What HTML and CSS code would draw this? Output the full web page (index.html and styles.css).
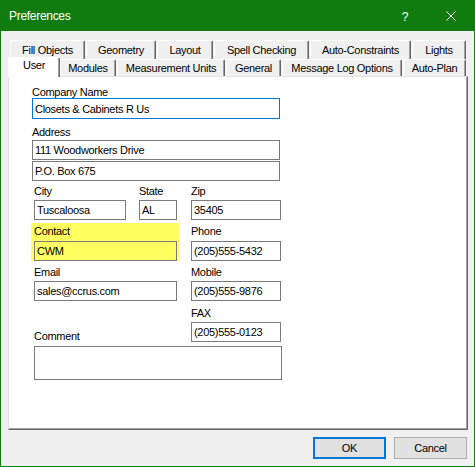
FILE: index.html
```html
<!DOCTYPE html>
<html>
<head>
<meta charset="utf-8">
<title>Preferences</title>
<link rel="stylesheet" href="styles.css">
</head>
<body>
<div class="window">
  <div class="titlebar">
    <span class="title">Preferences</span>
    <div class="controls">
      <span class="ctl help">?</span>
      <span class="ctl close"><svg width="10" height="10" viewBox="0 0 10 10"><path d="M0.5 0.5 L9.5 9.5 M9.5 0.5 L0.5 9.5" stroke="#fff" stroke-width="1" fill="none"/></svg></span>
    </div>
  </div>
  <div class="body">
    <div class="tabs">
      <div class="tabrow row1">
        <div class="tab">Fill Objects</div>
        <div class="tab">Geometry</div>
        <div class="tab">Layout</div>
        <div class="tab">Spell Checking</div>
        <div class="tab">Auto-Constraints</div>
        <div class="tab">Lights</div>
      </div>
      <div class="tabrow row2">
        <div class="tab selected">User</div>
        <div class="tab">Modules</div>
        <div class="tab">Measurement Units</div>
        <div class="tab">General</div>
        <div class="tab">Message Log Options</div>
        <div class="tab">Auto-Plan</div>
      </div>
    </div>
    <div class="panel">
      <div class="form">
        <label class="lbl">Company Name</label>
        <input class="field wide focus" value="Closets &amp; Cabinets R Us">
        <label class="lbl lbl-address">Address</label>
        <input class="field wide addr1" value="111 Woodworkers Drive">
        <input class="field wide addr2" value="P.O. Box 675">
        <div class="grid">
          <div class="citystate">
            <div class="group city">
              <label class="lbl">City</label>
              <input class="field w-city" value="Tuscaloosa">
            </div>
            <div class="group state">
              <label class="lbl">State</label>
              <input class="field w-state" value="AL">
            </div>
          </div>
          <div class="group">
            <label class="lbl">Zip</label>
            <input class="field w-right" value="35405">
          </div>

          <div class="contact">
            <label class="lbl">Contact</label>
            <input class="field w-left yellow" value="CWM">
          </div>
          <div class="group pad3 phone">
            <label class="lbl">Phone</label>
            <input class="field w-right" value="(205)555-5432">
          </div>

          <div class="group pad3 indent">
            <label class="lbl">Email</label>
            <input class="field w-left" value="sales@ccrus.com">
          </div>
          <div class="group pad3">
            <label class="lbl">Mobile</label>
            <input class="field w-right" value="(205)555-9876">
          </div>

          <label class="lbl comment-lbl">Comment</label>
          <div class="group pad4">
            <label class="lbl">FAX</label>
            <input class="field w-right" value="(205)555-0123">
          </div>
        </div>
        <textarea class="comment"></textarea>
      </div>
    </div>
    <div class="buttons">
      <button class="btn ok">OK</button>
      <button class="btn">Cancel</button>
    </div>
  </div>
</div>
</body>
</html>
```

FILE: styles.css
```css
* { box-sizing: border-box; }
html, body { margin: 0; padding: 0; }
body {
  width: 475px;
  height: 467px;
  overflow: hidden;
  font-family: "Liberation Sans", Arial, sans-serif;
  font-size: 11px;
  letter-spacing: -0.3px;
  color: #000;
  background: #f0f0f0;
}
.window {
  width: 475px;
  height: 467px;
  border: 1px solid #107c10;
  display: flex;
  flex-direction: column;
  background: #f0f0f0;
}
.titlebar {
  flex: none;
  height: 30px;
  background: #107c10;
  color: #fff;
  display: flex;
  align-items: stretch;
}
.title {
  padding-left: 8px;
  font-size: 12px;
  line-height: 30px;
}
.controls { margin-left: auto; display: flex; }
.ctl {
  width: 46px;
  display: flex;
  align-items: center;
  justify-content: center;
}
.help { font-size: 12px; padding-top: 1px; }
.close svg { display: block; margin-top: 0; }

.body {
  flex: 1;
  display: flex;
  flex-direction: column;
  padding: 9px 6px 7px 7px;
}
.tabs { flex: none; }
.tabrow { display: grid; column-gap: 1px; margin-left: 2px; }
.row1 { height: 19px; grid-template-columns: 75px 70px 56px 95px 101px 54px; }
.row2 { height: 17px; grid-template-columns: 49px 56px 108px 55px 120px 63px; }
.tab {
  background: #f0f0f0;
  border-left: 1px solid #fff;
  border-top: 1px solid #fff;
  border-right: 1px solid #696969;
  box-shadow: inset -1px 0 0 #a0a0a0;
  border-radius: 2px 2px 0 0;
  text-align: center;
  white-space: nowrap;
}
.row1 .tab { line-height: 18px; }
.row2 .tab { line-height: 16px; }
.tab.selected {
  background: #fff;
  margin: -2px -1px -1px -2px;
  line-height: 14px;
  position: relative;
  z-index: 1;
}

.panel {
  flex: 1;
  background: #fff;
  border-left: 1px solid #e3e3e3;
  border-top: 1px solid #e3e3e3;
  border-right: 1px solid #696969;
  border-bottom: 1px solid #696969;
  box-shadow: inset -1px -1px 0 #a0a0a0;
}
.form { padding: 10px 0 0 23px; }
.lbl {
  display: block;
  height: 11px;
  line-height: 11px;
  white-space: nowrap;
}
.field {
  display: block;
  height: 20px;
  margin: 0;
  padding: 0 2px;
  border: 1px solid #7a7a7a;
  border-radius: 0;
  background: #fff;
  color: #000;
  font: inherit;
  letter-spacing: inherit;
  outline: none;
}
.wide { width: 248px; }
.focus { height: 21px; border-color: #0078d7; }
.lbl-address { margin-top: 8px; }
.addr1 { margin-top: 2px; }
.addr2 { margin-top: 1px; }

.grid {
  display: grid;
  grid-template-columns: 160px 90px;
  row-gap: 3px;
  margin: 5px 0 0 -1px;
}
.group > .field { margin-top: 3px; }
.citystate { display: flex; }
.city { margin-left: 3px; }
.state { margin-left: 13px; }
.w-city { width: 92px; }
.w-state { width: 38px; }
.w-left { width: 143px; }
.w-right { width: 90px; }
.contact {
  width: 148px;
  background: #ffff60;
  padding: 3px 0 0 3px;
}
.contact > .field { margin-top: 4px; }
.yellow { background: #ffff60; }
.pad3 { padding-top: 3px; }
.pad4 { padding-top: 4px; }
.phone > .field { margin-top: 4px; }
.indent { margin-left: 3px; }
.comment-lbl { align-self: end; margin-left: 3px; }
.comment {
  display: block;
  width: 248px;
  height: 34px;
  margin: 4px 0 0 2px;
  padding: 0;
  border: 1px solid #7a7a7a;
  resize: none;
  font: inherit;
  outline: none;
  background: #fff;
}

.buttons {
  flex: none;
  display: flex;
  justify-content: flex-end;
  gap: 8px;
  margin-top: 7px;
  padding-right: 1px;
}
.btn {
  width: 73px;
  height: 22px;
  margin: 0;
  padding: 0;
  background: #e1e1e1;
  border: 1px solid #adadad;
  border-radius: 0;
  color: #000;
  font: inherit;
  letter-spacing: inherit;
}
.btn.ok { border: 2px solid #0078d7; }
```
